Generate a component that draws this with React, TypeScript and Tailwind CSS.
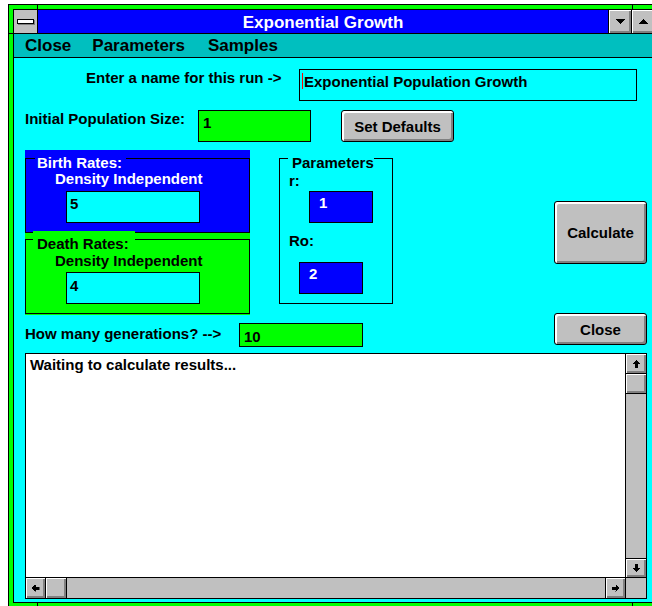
import React from "react";

type Dir = "up" | "down" | "left" | "right";

const rotation: Record<Dir, string> = {
  up: "",
  right: "rotate-90",
  down: "rotate-180",
  left: "-rotate-90",
};

// little filled arrow with a stem, as on the old scroll bar buttons
const ScrollArrow = ({ dir }: { dir: Dir }) => (
  <svg width="7" height="8" viewBox="0 0 7 8" className={rotation[dir]} shapeRendering="crispEdges">
    <polygon points="3.5,0 7,4 5,4 5,8 2,8 2,4 0,4" fill="#000" />
  </svg>
);

const bevel = "bg-[#c0c0c0] shadow-[inset_1px_1px_0_#ffffff,inset_-2px_-2px_0_#808080]";

const ScrollButton = ({ dir, className = "" }: { dir: Dir; className?: string }) => (
  <div className={`flex items-center justify-center ${bevel} ${className}`}>
    <ScrollArrow dir={dir} />
  </div>
);

const PushButton = ({ label, className = "" }: { label: string; className?: string }) => (
  <div
    className={`flex items-center justify-center border border-black rounded-[3px] bg-[#c0c0c0] shadow-[inset_2px_2px_0_#ffffff,inset_-2px_-2px_0_#808080] text-[15px] leading-[15px] ${className}`}
  >
    {label}
  </div>
);

const Field = ({ value, className = "" }: { value: string; className?: string }) => (
  <div className={`border border-black text-[15px] leading-[15px] ${className}`}>{value}</div>
);

const TitleBar = () => (
  <div className="flex h-[24px] border-b border-black">
    <div className="flex w-[24px] items-center justify-center border-r border-black bg-[#c0c0c0]">
      <div className="h-[5px] w-[17px] border border-black bg-white shadow-[1px_1px_0_#808080]" />
    </div>
    <div className="flex-1 bg-[#0000ff] pt-[4px] text-center text-[17px] leading-[17px] text-white">
      Exponential Growth
    </div>
    <div className={`flex w-[23px] items-center justify-center border-l border-black ${bevel}`}>
      <svg width="9" height="5" viewBox="0 0 9 5" shapeRendering="crispEdges">
        <polygon points="0,0 9,0 4.5,5" fill="#000" />
      </svg>
    </div>
    <div className={`flex w-[23px] items-center justify-center border-l border-black ${bevel}`}>
      <svg width="9" height="5" viewBox="0 0 9 5" shapeRendering="crispEdges">
        <polygon points="4.5,0 9,5 0,5" fill="#000" />
      </svg>
    </div>
  </div>
);

const MenuBar = () => (
  <div className="flex h-[24px] gap-[21px] border-b border-black bg-[#00bfbf] pl-[11px] pt-[3px] text-[17px] leading-[17px]">
    <span>Close</span>
    <span>Parameters</span>
    <span className="ml-[2px]">Samples</span>
  </div>
);

const RatesGroups = () => (
  <div className="flex w-[225px] flex-col">
    {/* birth rates */}
    <div className="h-[83px] bg-[#0000ff] pt-[8px] text-white">
      <div className="h-[75px] border border-black">
        <div className="-mt-[4px] ml-[9px] w-fit bg-[#0000ff] pl-[2px] pr-[4px] text-[15px] leading-[15px]">
          Birth Rates:
        </div>
        <div className="ml-[29px] mt-[1px] text-[15px] leading-[15px]">Density Independent</div>
        <Field value="5" className="ml-[40px] mt-[5px] h-[32px] w-[134px] bg-[#00ffff] pl-[3px] pt-[4px] text-black" />
      </div>
    </div>
    {/* death rates */}
    <div className="h-[82px] bg-[#00ff00] pt-[6px]">
      <div className="h-[75px] border border-black">
        <div className="-mt-[9px] ml-[7px] w-fit bg-[#00ff00] pl-[4px] pr-[6px] pt-[5px] text-[15px] leading-[15px]">
          Death Rates:
        </div>
        <div className="ml-[29px] mt-[2px] text-[15px] leading-[15px]">Density Independent</div>
        <Field value="4" className="ml-[40px] mt-[4px] h-[32px] w-[134px] bg-[#00ffff] pl-[3px] pt-[5px]" />
      </div>
    </div>
  </div>
);

const ParamsGroup = () => (
  <div className="ml-[29px] mt-[8px] h-[146px] w-[114px] border border-black">
    <div className="-mt-[4px] ml-[8px] w-fit bg-[#00ffff] pl-[4px] text-[15px] leading-[15px]">Parameters</div>
    <div className="ml-[9px] mt-[3px] text-[15px] leading-[15px]">r:</div>
    <Field value="1" className="ml-[29px] mt-[3px] h-[32px] w-[64px] bg-[#0000ff] pl-[9px] pt-[3px] text-white" />
    <div className="ml-[9px] mt-[10px] text-[15px] leading-[15px]">Ro:</div>
    <Field value="2" className="ml-[19px] mt-[14px] h-[32px] w-[64px] bg-[#0000ff] pl-[9px] pt-[3px] text-white" />
  </div>
);

const Output = () => (
  <div className="mt-[6px] grid h-[246px] w-[622px] grid-cols-[1fr_21px] grid-rows-[1fr_21px] border border-black bg-white">
    <div className="pl-[4px] pt-[3px] text-[15px] leading-[15px]">Waiting to calculate results...</div>
    <div className="flex flex-col border-l border-black bg-[#c0c0c0]">
      <ScrollButton dir="up" className="h-[20px] border-b border-black" />
      <div className={`h-[20px] border-b border-black ${bevel}`} />
      <div className="flex-1" />
      <ScrollButton dir="down" className="h-[19px] border-t border-black" />
    </div>
    <div className="flex border-t border-black bg-[#c0c0c0]">
      <ScrollButton dir="left" className="w-[20px] border-r border-black" />
      <div className={`w-[21px] border-r border-black ${bevel}`} />
      <div className="flex-1" />
      <ScrollButton dir="right" className="w-[20px] border-l border-black" />
    </div>
    <div className="border-l border-t border-black bg-[#c0c0c0]" />
  </div>
);

const Client = () => (
  <div className="h-[544px] bg-[#00ffff] pl-[11px] pt-[11px]">
    <div className="flex items-start">
      <div className="ml-[61px] w-[213px] pt-[1px] text-[15px] leading-[15px]">Enter a name for this run -&gt;</div>
      <div className="flex h-[32px] w-[338px] items-start border border-black pl-[2px] pt-[3px] text-[15px] leading-[15px]">
        <span className="mr-[1px] h-[16px] w-px bg-[#ff0000]" />
        <span className="pt-[1px]">Exponential Population Growth</span>
      </div>
    </div>

    <div className="mt-[9px] flex items-start">
      <div className="w-[173px] pt-[1px] text-[15px] leading-[15px]">Initial Population Size:</div>
      <Field value="1" className="h-[32px] w-[113px] bg-[#00ff00] pl-[4px] pt-[4px]" />
      <PushButton label="Set Defaults" className="ml-[30px] h-[32px] w-[113px]" />
    </div>

    <div className="mt-[8px] flex items-start">
      <div className="flex w-[368px] flex-col">
        <div className="flex items-start">
          <RatesGroups />
          <ParamsGroup />
        </div>
        <div className="mt-[8px] flex items-start">
          <div className="w-[214px] pt-[3px] text-[15px] leading-[15px]">How many generations? --&gt;</div>
          <Field value="10" className="h-[24px] w-[124px] bg-[#00ff00] pl-[4px] pt-[5px]" />
        </div>
      </div>
      <div className="ml-[161px] flex flex-col">
        <PushButton label="Calculate" className="mt-[51px] h-[63px] w-[93px]" />
        <PushButton label="Close" className="mt-[49px] h-[32px] w-[93px]" />
      </div>
    </div>

    <Output />
  </div>
);

export default function App() {
  return (
    <div className="h-[606px] w-[652px] overflow-hidden bg-white pl-[8px] pt-[4px] font-['Liberation_Sans',Arial,sans-serif] font-bold text-black">
      <div className="relative w-[652px] border border-black bg-[#00ff00] p-[4px]">
        {/* resize notches in the sizing frame */}
        <span className="absolute left-[28px] top-0 h-[4px] w-px bg-black" />
        <span className="absolute left-[623px] top-0 h-[4px] w-px bg-black" />
        <span className="absolute bottom-0 left-[28px] h-[4px] w-px bg-black" />
        <span className="absolute bottom-0 left-[623px] h-[4px] w-px bg-black" />
        <span className="absolute left-0 top-[28px] h-px w-[4px] bg-black" />
        <div className="border border-black">
          <TitleBar />
          <MenuBar />
          <Client />
        </div>
      </div>
    </div>
  );
}
